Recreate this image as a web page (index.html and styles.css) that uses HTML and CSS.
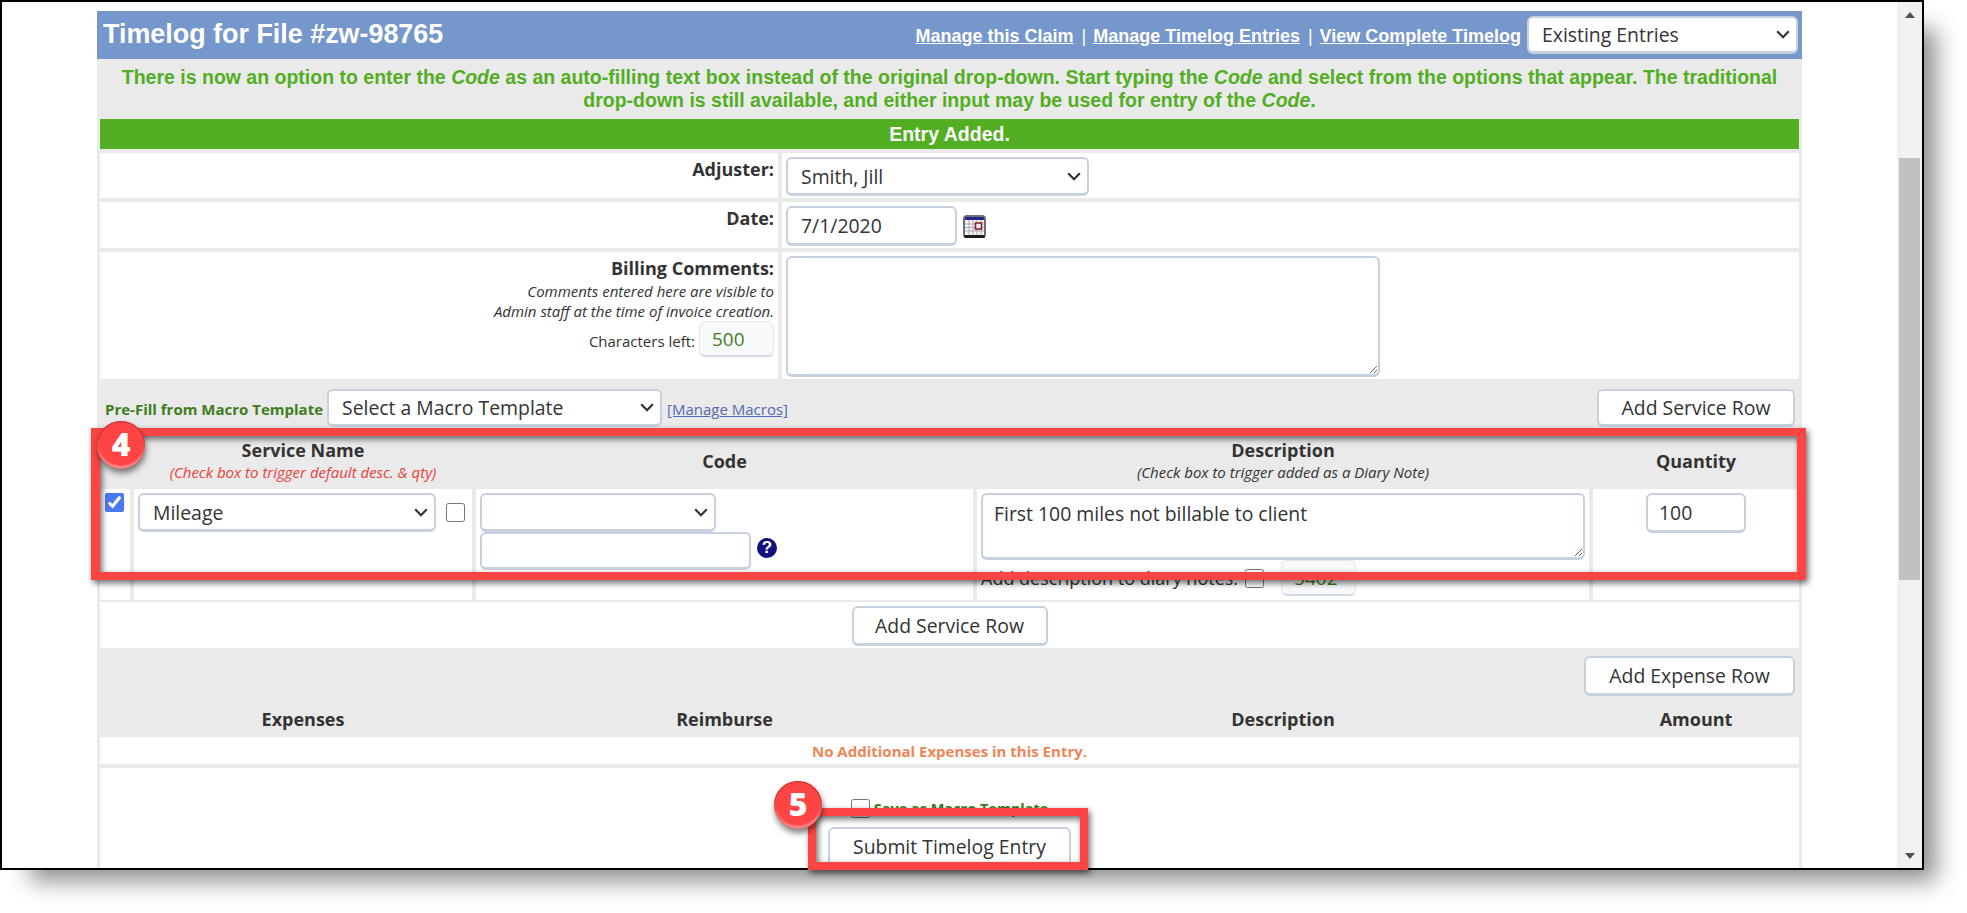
FILE: index.html
```html
<!DOCTYPE html>
<html lang="en">
<head>
<meta charset="utf-8">
<title>Timelog</title>
<link rel="stylesheet" href="styles.css">
</head>
<body>
<div class="shot">
  <div class="window">
    <main class="page">
      <section class="panel">
        <header class="panel-head">
          <h1 class="title">Timelog for File #zw-98765</h1>
          <nav class="head-nav">
            <a href="#">Manage this Claim</a><span class="sep">|</span><a href="#">Manage Timelog Entries</a><span class="sep">|</span><a href="#">View Complete Timelog</a>
            <select class="ctl sel-existing"><option>Existing Entries</option></select>
          </nav>
        </header>
        <p class="note">There is now an option to enter the <em>Code</em> as an auto-filling text box instead of the original drop-down. Start typing the <em>Code</em> and select from the options that appear. The traditional<br>drop-down is still available, and either input may be used for entry of the <em>Code</em>.</p>
        <div class="body">
          <div class="flash">Entry Added.</div>
          <div class="form-row">
            <div class="lab"><b>Adjuster:</b></div>
            <div class="val"><select class="ctl sel-adjuster"><option>Smith, Jill</option></select></div>
          </div>
          <div class="form-row">
            <div class="lab"><b>Date:</b></div>
            <div class="val val-date"><input class="ctl in-date" value="7/1/2020">
              <svg class="cal" width="23" height="23" viewBox="0 0 23 23">
                <rect x="0" y="0" width="23" height="23" rx="4" fill="#6e6e74"/>
                <rect x="2" y="2" width="19" height="3" fill="#24248a"/>
                <rect x="2" y="5" width="19" height="15" fill="#f4f4f6"/>
                <path d="M2 9h19M2 12.500h19M2 16h19M6 5v15M10 5v15M14 5v15M18 5v15" stroke="#a9a9b0" stroke-width="1" fill="none"/>
                <rect x="12.500" y="8" width="6" height="6" fill="#f4f0f0" stroke="#8e1c2c" stroke-width="1.600"/>
                <rect x="1" y="20" width="21" height="3" rx="1.500" fill="#1c1c1c"/>
              </svg>
            </div>
          </div>
          <div class="form-row">
            <div class="lab">
              <b>Billing Comments:</b>
              <div class="hint">Comments entered here are visible to<br>Admin staff at the time of invoice creation.</div>
              <div class="chars"><span>Characters left:</span><input class="count count-a" value="500"></div>
            </div>
            <div class="val"><textarea class="ctl ta-billing"></textarea></div>
          </div>
          <div class="macro">
            <span class="prefill">Pre-Fill from Macro Template</span>
            <select class="ctl sel-macro"><option>Select a Macro Template</option></select>
            <a class="macro-link" href="#">[Manage Macros]</a>
            <button class="ctl btn btn-top">Add Service Row</button>
          </div>
          <div class="cols cols-head">
            <div></div>
            <div class="th">Service Name<small class="red">(Check box to trigger default desc. &amp; qty)</small></div>
            <div class="th">Code</div>
            <div class="th">Description<small>(Check box to trigger added as a Diary Note)</small></div>
            <div class="th">Quantity</div>
          </div>
          <div class="cols cols-data">
            <div class="td td-check"><input type="checkbox" class="chk chk-blue" checked></div>
            <div class="td td-service"><select class="ctl sel-service"><option>Mileage</option></select><input type="checkbox" class="chk"></div>
            <div class="td td-code">
              <select class="ctl sel-code"><option></option></select>
              <div class="code-line"><input class="ctl in-code"><span class="help">?</span></div>
            </div>
            <div class="td td-desc">
              <textarea class="ctl ta-desc">First 100 miles not billable to client</textarea>
              <div class="diary"><span>Add description to diary notes:</span><input type="checkbox" class="chk"><input class="count count-b" value="5402"></div>
            </div>
            <div class="td td-qty"><input class="ctl in-qty" value="100"></div>
          </div>
          <div class="add-row"><button class="ctl btn btn-add">Add Service Row</button></div>
          <div class="exp-tools"><button class="ctl btn btn-exp">Add Expense Row</button></div>
          <div class="cols cols-exp">
            <div></div>
            <div class="th">Expenses</div>
            <div class="th">Reimburse</div>
            <div class="th">Description</div>
            <div class="th">Amount</div>
          </div>
          <div class="none">No Additional Expenses in this Entry.</div>
          <div class="submit-row">
            <label class="save"><input type="checkbox" class="chk"><span>Save as Macro Template</span></label>
            <button class="ctl btn btn-submit">Submit Timelog Entry</button>
          </div>
        </div>
      </section>
    </main>
    <aside class="scrollbar">
      <span class="arrow arrow-up"></span>
      <span class="thumb"></span>
      <span class="arrow arrow-down"></span>
    </aside>
  </div>
  <div class="callout callout-a"></div>
  <div class="callout callout-b"></div>
  <div class="badge badge-a">4</div>
  <div class="badge badge-b">5</div>
</div>
</body>
</html>
```
FILE: styles.css
```css
* { box-sizing: border-box; }
html, body { margin: 0; padding: 0; background: #fff; }
body { font-family: "Open Sans", sans-serif; color: #333; font-size: 18px; overflow: hidden; width: 1967px; height: 913px; }

.shot { position: relative; width: 1924px; height: 870px; }
.window {
  width: 1924px; height: 870px; border: 2px solid #000; background: #fff;
  display: flex; overflow: hidden;
  box-shadow: 21px 20px 22px -9px rgba(0,0,0,.45);
}
.page { flex: 1; min-width: 0; padding: 9px 95px 0; }
.panel { background: #eaeaea; height: 900px; }

.panel-head { height: 48px; background: #7697cc; display: flex; align-items: center; justify-content: space-between; padding: 0 4px 0 6px; }
.title { margin: 0 0 2px; font: bold 26.900px/30px "Liberation Sans", Arial, sans-serif; color: #fff; }
.head-nav { display: flex; align-items: center; font: bold 18px/20px "Liberation Sans", Arial, sans-serif; color: #fff; }
.head-nav a { color: #fff; margin-top: 2px; }
.sep { font-weight: normal; margin: 2px 7px 0 8px; }

.ctl {
  font-family: "Open Sans", sans-serif; font-size: 19.400px; color: #333; background: #fff;
  border: 2px solid #c6d0df; border-bottom-width: 3px; border-radius: 6px; outline: none; margin: 0;
}
select.ctl {
  appearance: none;
  background-image: url("data:image/svg+xml,%3Csvg xmlns='http://www.w3.org/2000/svg' width='14' height='9' viewBox='0 0 14 9'%3E%3Cpath d='M1.200 1.200 7 7.200l5.800-6' fill='none' stroke='%23333' stroke-width='2.200'/%3E%3C/svg%3E");
  background-repeat: no-repeat; background-position: right 6px center; padding: 0 24px 0 13px;
}
.sel-existing { width: 271px; height: 38px; margin-left: 6px; padding-top: 1px; }

.note { margin: 0; height: 60px; padding-top: 7px; text-align: center; font: bold 19.500px/23px "Liberation Sans", Arial, sans-serif; color: #52ae22; }
.body { padding: 0 3px; }
.flash { height: 30px; background: #52ae22; color: #fff; text-align: center; font: bold 19.500px/30px "Liberation Sans", Arial, sans-serif; }

.form-row { display: flex; gap: 4px; margin-top: 4px; }
.lab { width: 678px; background: #fff; text-align: right; padding: 4px 4px 0 0; line-height: 24px; }
.val { flex: 1; background: #fff; padding: 4px 4px 2px; }
.val-date { display: flex; align-items: center; }
.sel-adjuster { width: 303px; height: 39px; display: block; }
.in-date { width: 171px; height: 40px; padding: 0 13px; }
.cal { margin-left: 6px; }
.hint { font-size: 15px; line-height: 20px; font-style: italic; margin-top: 1px; }
.chars { display: flex; justify-content: flex-end; align-items: center; gap: 4px; font-size: 15px; }
.chars span { padding-top: 3px; }
.count { width: 75px; height: 36px; border: 1px solid #e4e8ee; border-bottom: 2px solid #d3dbe6; border-radius: 6px; background: #f8f9fa; color: #3f7d1e; font: 19px "Open Sans", sans-serif; padding: 0 12px; margin: 0; outline: none; }
.ta-billing { display: block; width: 594px; height: 121px; resize: both; }

.macro { display: flex; align-items: center; height: 49px; padding: 10px 4px 1px 5px; }
.prefill { font-size: 15px; font-weight: bold; color: #3f7d1e; margin-top: 2px; }
.sel-macro { width: 335px; height: 38px; margin-left: 4px; }
.macro-link { font-size: 15px; color: #5468b0; margin-left: 5px; margin-top: 2px; }
.btn { cursor: pointer; height: 40px; padding: 0; }
.btn-top { width: 198px; height: 38px; margin-left: auto; }

.cols { display: grid; grid-template-columns: 30px 338px 497px 612px 206px; column-gap: 4px; }
.cols-head { height: 61px; align-items: center; padding-top: 5px; }
.th { text-align: center; font-weight: bold; line-height: 22px; }
.th small { display: block; font-size: 15px; font-weight: normal; font-style: italic; line-height: 22px; }
.th small.red { color: #e8413c; }
.cols-data { height: 109px; }
.td { background: #fff; padding: 4px; }
.chk { width: 19px; height: 19px; margin: 0; accent-color: #4a78ee; display: block; flex: none; }
.chk-blue { margin-left: 1px; }
.td-service { display: flex; align-items: flex-start; }
.sel-service { width: 298px; height: 39px; }
.td-service .chk { margin: 10px 0 0 10px; }
.sel-code { width: 236px; height: 39px; display: block; }
.code-line { display: flex; align-items: center; }
.in-code { width: 271px; height: 38px; padding: 0 10px; }
.help { width: 20px; height: 20px; border-radius: 50%; background: #10107e; color: #fff; font: bold 17px/20px "Liberation Sans", Arial, sans-serif; text-align: center; margin: 0 0 6px 6px; }
.ta-desc { display: block; width: 604px; height: 67px; padding: 5px 11px; resize: both; }
.diary { display: flex; align-items: center; height: 36px; font-size: 18px; white-space: nowrap; }
.diary .chk { margin: 0 0 0 7px; }
.count-b { margin-left: 17px; height: 36px; }
.td-qty { text-align: center; }
.in-qty { width: 100px; height: 40px; padding: 0 11px; }

.add-row { background: #fff; margin-top: 4px; padding: 4px 0 2px; text-align: center; }
.btn-add { width: 196px; }
.exp-tools { display: flex; justify-content: flex-end; padding: 8px 4px 0 0; }
.btn-exp { width: 211px; }
.cols-exp { height: 41px; align-items: center; padding-top: 4px; }
.none { background: #fff; height: 27px; text-align: center; font-size: 15px; font-weight: bold; line-height: 29px; color: #ef8557; }
.submit-row { background: #fff; margin-top: 4px; height: 120px; padding-top: 31px; display: flex; flex-direction: column; align-items: center; }
.save { display: flex; align-items: center; gap: 4px; font-size: 14.500px; font-weight: bold; color: #3f7d1e; height: 19px; margin-left: 0; }
.btn-submit { width: 243px; margin-top: 9px; }

.scrollbar { width: 25px; flex: none; background: #f1f1f1; display: flex; flex-direction: column; align-items: center; padding: 10px 0 9px; }
.arrow { width: 0; height: 0; border-left: 5px solid transparent; border-right: 5px solid transparent; flex: none; }
.arrow-up { border-bottom: 6px solid #505050; }
.arrow-down { border-top: 6px solid #505050; margin-top: auto; }
.thumb { width: 21px; height: 422px; margin-top: 140px; background: #c1c1c1; flex: none; }

.callout { position: absolute; border: 8px solid #ff4444; filter: drop-shadow(2px 3px 3px rgba(0,0,0,.6)); }
.callout-a { left: 91px; top: 428px; width: 1715px; height: 152px; border-width: 8px 9px; }
.callout-b { left: 808px; top: 808px; width: 280px; height: 62px; }
.badge {
  position: absolute; width: 48px; height: 48px; border-radius: 50%; background: #ff4444; color: #fff;
  font-size: 32px; font-weight: 800; line-height: 45px; text-align: center;
  box-shadow: 1px 4px 6px rgba(0,0,0,.5), inset 0 -3px 2px rgba(255,255,255,.4), inset 0 0 0 1px rgba(130,20,20,.45);
}
.badge-a { left: 97px; top: 421px; }
.badge-b { left: 774px; top: 781px; }
```
